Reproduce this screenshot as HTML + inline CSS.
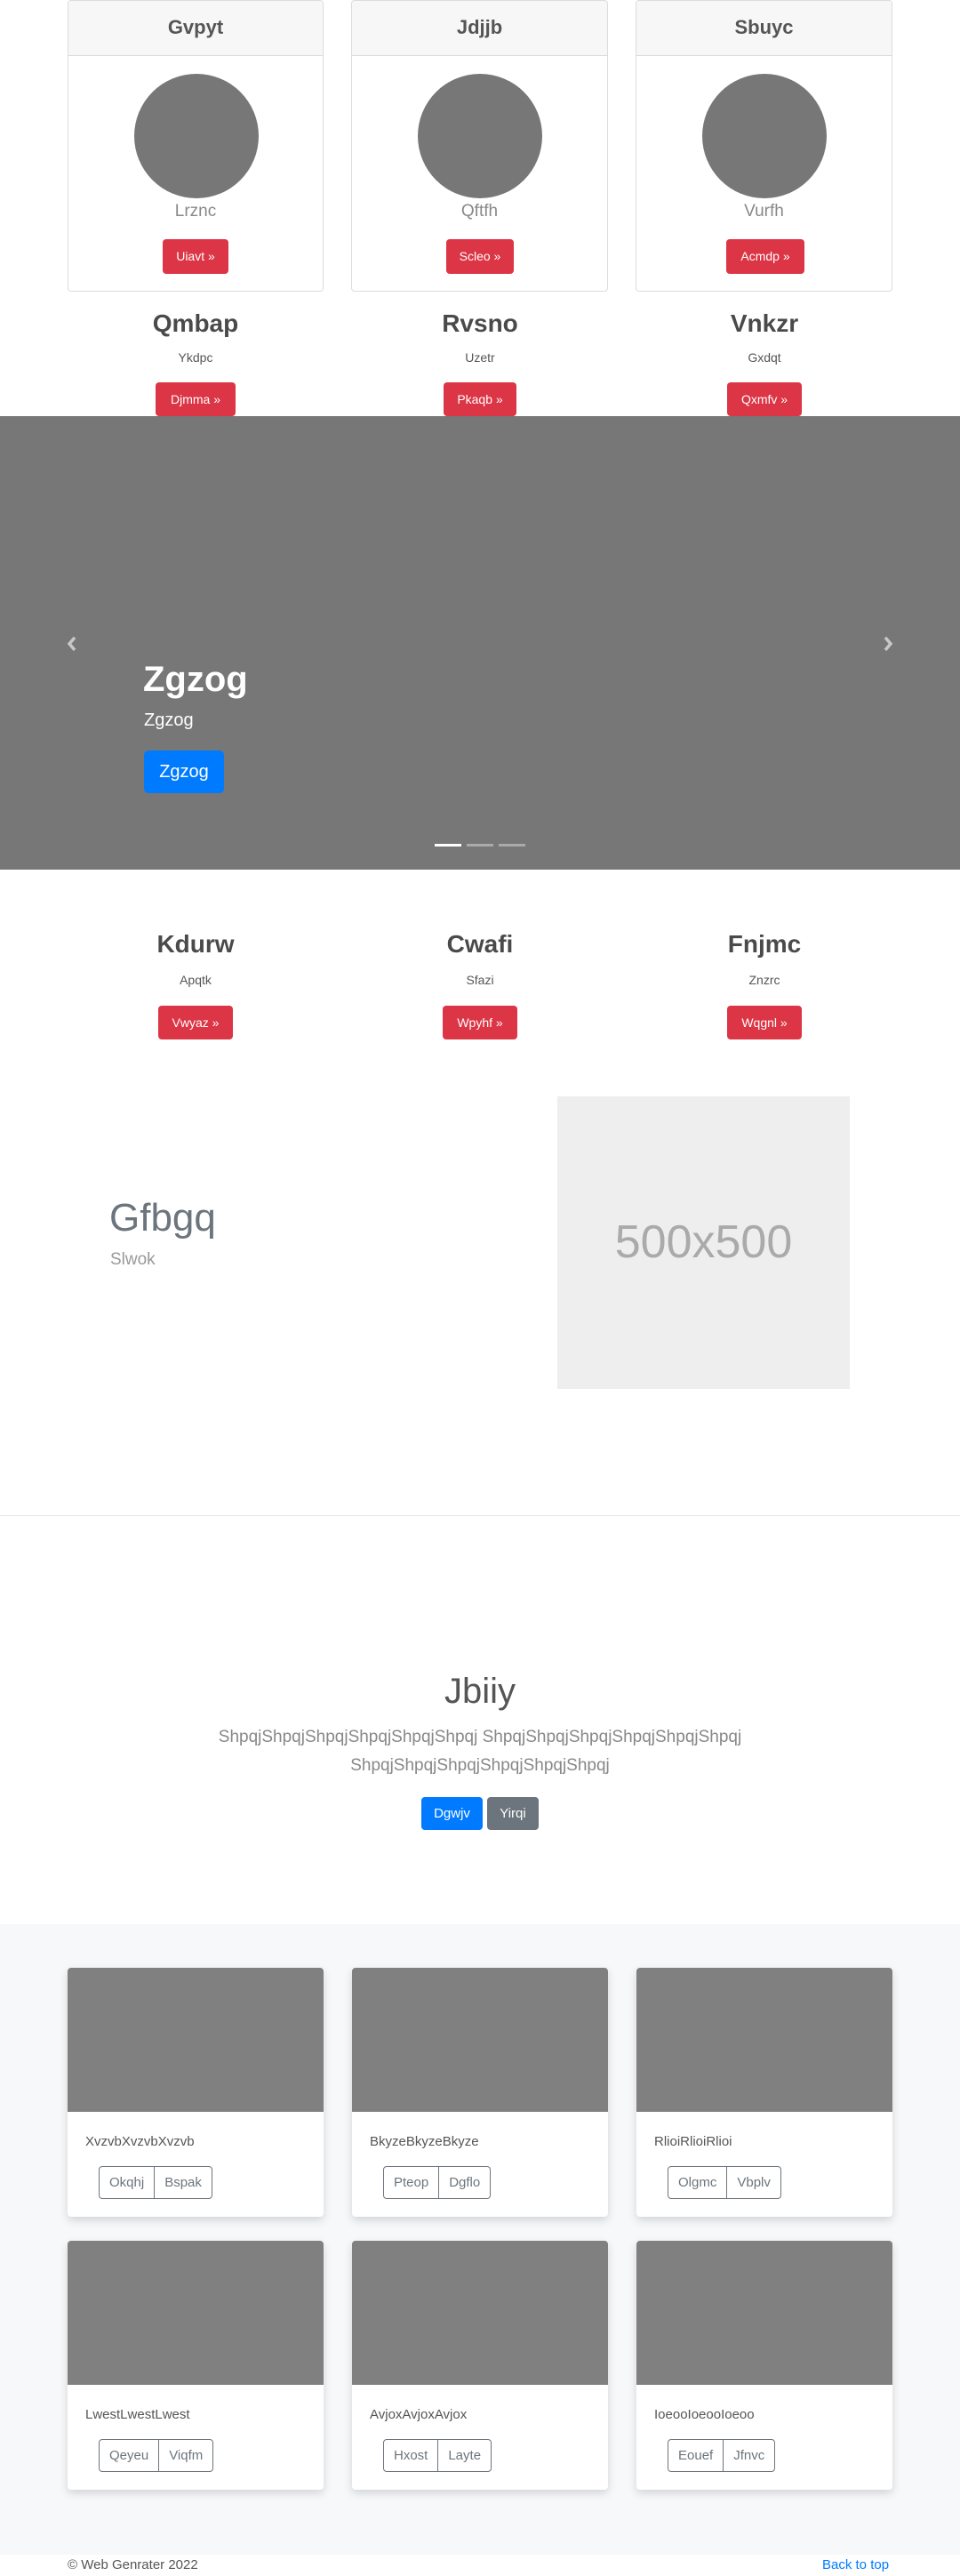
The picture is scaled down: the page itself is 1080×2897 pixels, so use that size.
<!DOCTYPE html>
<html><head><meta charset="utf-8">
<style>
*{box-sizing:border-box;margin:0;padding:0}
body{width:1080px;height:2897px;position:relative;font-family:"Liberation Sans",sans-serif;color:#212529;background:#fff;overflow:hidden}
.a{position:absolute}
.c{text-align:center}
.card{position:absolute;border:1px solid #dcdcdc;border-radius:4px;background:#fff;overflow:hidden}
.ch{height:62px;background:#f7f7f7;border-bottom:1px solid #dcdcdc;font-size:22px;font-weight:bold;color:#555;text-align:center;line-height:60px}
.circ{position:absolute;width:140px;height:140px;border-radius:50%;background:#777;left:74px;top:82px}
.red{position:absolute;background:#dc3545;color:#fff;border-radius:4px;font-size:14px;text-align:center}
.h2{position:absolute;font-size:28px;font-weight:bold;color:#4a4a4a;text-align:center;width:288px}
.sm{position:absolute;font-size:14px;color:#555;text-align:center;width:288px}
.pc{position:absolute;background:#fff;border-radius:4px;box-shadow:0 4px 10px rgba(0,0,0,.15);width:288px;height:280px;overflow:hidden}
.pc .im{height:162px;background:#808080}
.pc .t{position:absolute;left:20px;top:187px;font-size:15px;color:#555}
.bg{position:absolute;left:35px;top:223px;height:37px;display:flex;border:1px solid #6c757d;border-radius:4px}
.bg span{padding:0 11px;line-height:35px;font-size:15px;color:#6c757d}
.bg span+span{border-left:1px solid #6c757d}
</style></head><body>

<div class="card" style="left:76px;top:0;width:288px;height:328px"><div class="ch">Gvpyt</div><div class="circ"></div><div class="a c" style="top:226px;width:100%;font-size:19px;color:#888">Lrznc</div><div class="red" style="left:106px;top:268px;width:74px;height:39px;line-height:39px">Uiavt »</div></div>
<div class="card" style="left:395px;top:0;width:289px;height:328px"><div class="ch">Jdjjb</div><div class="circ"></div><div class="a c" style="top:226px;width:100%;font-size:19px;color:#888">Qftfh</div><div class="red" style="left:106px;top:268px;width:76px;height:39px;line-height:39px">Scleo »</div></div>
<div class="card" style="left:715px;top:0;width:289px;height:328px"><div class="ch">Sbuyc</div><div class="circ"></div><div class="a c" style="top:226px;width:100%;font-size:19px;color:#888">Vurfh</div><div class="red" style="left:101px;top:268px;width:88px;height:39px;line-height:39px">Acmdp »</div></div>

<div class="h2" style="left:76px;top:348px">Qmbap</div>
<div class="h2" style="left:396px;top:348px">Rvsno</div>
<div class="h2" style="left:716px;top:348px">Vnkzr</div>
<div class="sm" style="left:76px;top:394px">Ykdpc</div>
<div class="sm" style="left:396px;top:394px">Uzetr</div>
<div class="sm" style="left:716px;top:394px">Gxdqt</div>
<div class="red" style="left:175px;top:430px;width:90px;height:38px;line-height:38px">Djmma »</div>
<div class="red" style="left:499px;top:430px;width:82px;height:38px;line-height:38px">Pkaqb »</div>
<div class="red" style="left:818px;top:430px;width:84px;height:38px;line-height:38px">Qxmfv »</div>

<div class="a" style="left:0;top:468px;width:1080px;height:510px;background:#777">
<svg class="a" style="left:74px;top:247px" width="14" height="18" viewBox="0 0 14 18"><path d="M10 2 L4 9 L10 16" stroke="#c8c8c8" stroke-width="3.5" fill="none"/></svg>
<svg class="a" style="left:992px;top:247px" width="14" height="18" viewBox="0 0 14 18"><path d="M4 2 L10 9 L4 16" stroke="#c8c8c8" stroke-width="3.5" fill="none"/></svg>
<div class="a" style="left:161px;top:274px;font-size:40px;font-weight:bold;color:#fff">Zgzog</div>
<div class="a" style="left:162px;top:331px;font-size:20px;color:#fff">Zgzog</div>
<div class="a" style="left:162px;top:376px;width:90px;height:48px;background:#007bff;border-radius:5px;color:#fff;font-size:20px;text-align:center;line-height:48px">Zgzog</div>
<div class="a" style="left:489px;top:481px;width:30px;height:3px;background:#fff"></div>
<div class="a" style="left:525px;top:481px;width:30px;height:3px;background:#aaa"></div>
<div class="a" style="left:561px;top:481px;width:30px;height:3px;background:#aaa"></div>
</div>

<div class="h2" style="left:76px;top:1046px">Kdurw</div>
<div class="h2" style="left:396px;top:1046px">Cwafi</div>
<div class="h2" style="left:716px;top:1046px">Fnjmc</div>
<div class="sm" style="left:76px;top:1094px">Apqtk</div>
<div class="sm" style="left:396px;top:1094px">Sfazi</div>
<div class="sm" style="left:716px;top:1094px">Znzrc</div>
<div class="red" style="left:178px;top:1131px;width:84px;height:38px;line-height:38px">Vwyaz »</div>
<div class="red" style="left:498px;top:1131px;width:84px;height:38px;line-height:38px">Wpyhf »</div>
<div class="red" style="left:818px;top:1131px;width:84px;height:38px;line-height:38px">Wqgnl »</div>

<div class="a" style="left:123px;top:1345px;font-size:44px;color:#6c757d">Gfbgq</div>
<div class="a" style="left:124px;top:1406px;font-size:19px;color:#999">Slwok</div>
<div class="a" style="left:627px;top:1233px;width:329px;height:329px;background:#eee;color:#aaa;font-size:52px;text-align:center;line-height:329px">500x500</div>

<div class="a" style="left:0;top:1704px;width:1080px;height:1px;background:#e5e5e5"></div>

<div class="a c" style="left:0;top:1880px;width:1080px;font-size:40px;color:#555;font-weight:300">Jbiiy</div>
<div class="a c" style="left:230px;top:1938px;width:620px;font-size:19px;line-height:32px;color:#888">ShpqjShpqjShpqjShpqjShpqjShpqj ShpqjShpqjShpqjShpqjShpqjShpqj ShpqjShpqjShpqjShpqjShpqjShpqj</div>
<div class="a" style="left:474px;top:2021px;width:69px;height:37px;background:#007bff;border-radius:4px;color:#fff;font-size:15px;text-align:center;line-height:37px">Dgwjv</div>
<div class="a" style="left:548px;top:2021px;width:58px;height:37px;background:#6c757d;border-radius:4px;color:#fff;font-size:15px;text-align:center;line-height:37px">Yirqi</div>

<div class="a" style="left:0;top:2164px;width:1080px;height:709px;background:#f7f8fa"></div>
<div class="pc" style="left:76px;top:2213px"><div class="im"></div><div class="t">XvzvbXvzvbXvzvb</div><div class="bg"><span>Okqhj</span><span>Bspak</span></div></div>
<div class="pc" style="left:396px;top:2213px"><div class="im"></div><div class="t">BkyzeBkyzeBkyze</div><div class="bg"><span>Pteop</span><span>Dgflo</span></div></div>
<div class="pc" style="left:716px;top:2213px"><div class="im"></div><div class="t">RlioiRlioiRlioi</div><div class="bg"><span>Olgmc</span><span>Vbplv</span></div></div>
<div class="pc" style="left:76px;top:2520px"><div class="im"></div><div class="t">LwestLwestLwest</div><div class="bg"><span>Qeyeu</span><span>Viqfm</span></div></div>
<div class="pc" style="left:396px;top:2520px"><div class="im"></div><div class="t">AvjoxAvjoxAvjox</div><div class="bg"><span>Hxost</span><span>Layte</span></div></div>
<div class="pc" style="left:716px;top:2520px"><div class="im"></div><div class="t">IoeooIoeooIoeoo</div><div class="bg"><span>Eouef</span><span>Jfnvc</span></div></div>

<div class="a" style="left:76px;top:2876px;font-size:15px;color:#555">© Web Genrater 2022</div>
<div class="a" style="left:925px;top:2876px;font-size:15px;color:#007bff">Back to top</div>
</body></html>
